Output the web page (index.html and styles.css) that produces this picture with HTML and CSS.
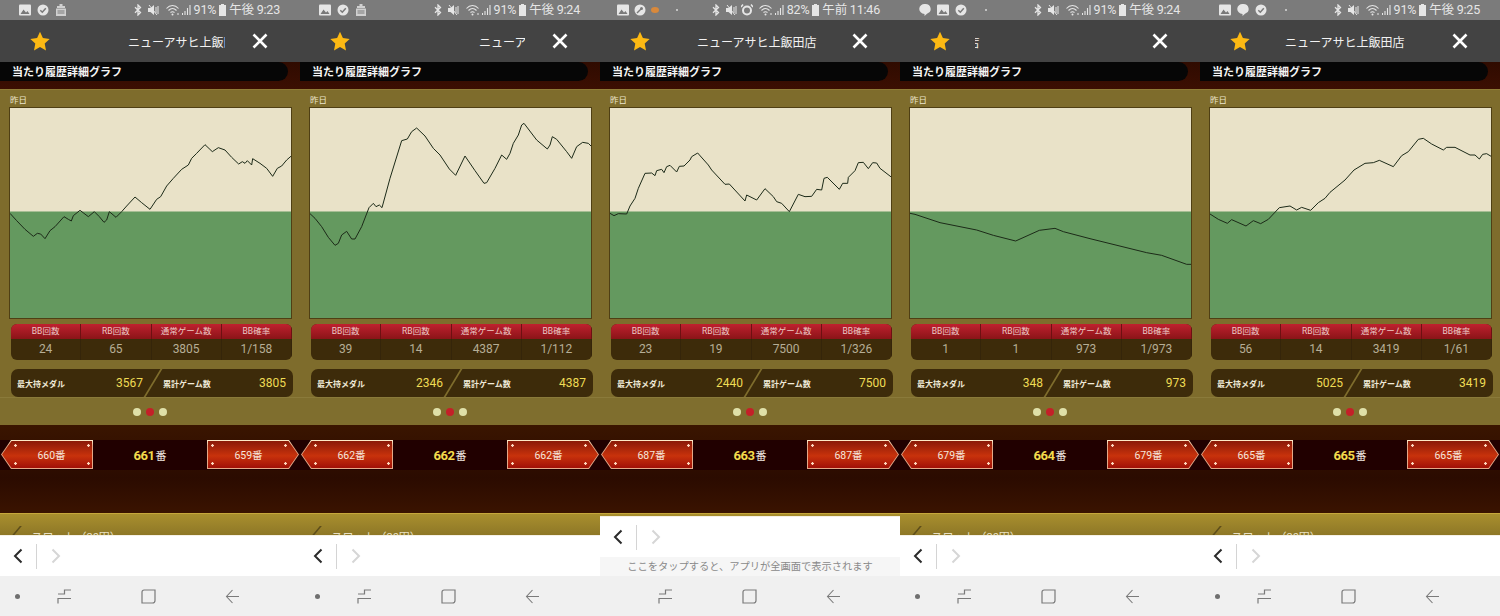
FILE: index.html
```html
<!DOCTYPE html>
<html lang="ja">
<head>
<meta charset="utf-8">
<title>当たり履歴詳細グラフ</title>
<link rel="stylesheet" href="styles.css">
</head>
<body>
<svg class="defs" aria-hidden="true">
  <symbol id="i-img" viewBox="0 0 12 11"><path d="M0 1a1 1 0 0 1 1-1h10a1 1 0 0 1 1 1v9a1 1 0 0 1-1 1H1a1 1 0 0 1-1-1z" fill="#e6e6e6"/><path d="M1.5 9.5 4.5 5l2.5 3 1.500-1.500 2 3z" fill="#7a7a7a"/></symbol>
  <symbol id="i-check" viewBox="0 0 12 12"><circle cx="6" cy="6" r="5.500" fill="#e6e6e6"/><path d="m3.300 6.200 2 2 3.500-4" fill="none" stroke="#7a7a7a" stroke-width="1.500"/></symbol>
  <symbol id="i-cal" viewBox="0 0 12 12"><path d="M4.500 0h3v2H4.500zM2 2h8v2H2zM1 4.500h10V12H1z" fill="#d0d0d0"/><path d="M2.500 7h7M2.500 9h7" stroke="#7a7a7a"/></symbol>
  <symbol id="i-bubble" viewBox="0 0 12 12"><path d="M6 0a5.500 5 0 0 1 2 9.700L5.500 12V10A5.500 5 0 0 1 6 0z" fill="#e6e6e6"/></symbol>
  <symbol id="i-key" viewBox="0 0 12 12"><circle cx="6" cy="6" r="5.500" fill="#e6e6e6"/><path d="m3 9 4-4" stroke="#7a7a7a" stroke-width="1.500"/><circle cx="7.500" cy="4.500" r="1.500" fill="#7a7a7a"/></symbol>
  <symbol id="i-bt" viewBox="0 0 8 12"><path d="M1 3.300 6.500 8.500 4 11V1l2.500 2.500L1 8.700" fill="none" stroke="#e6e6e6" stroke-width="1.300"/></symbol>
  <symbol id="i-mute" viewBox="0 0 12 12"><path d="M0 4h2.500L6 1v10L2.500 8H0z" fill="#e6e6e6"/><path d="M8 3v6M10 2v8M1 1l8 10" stroke="#e6e6e6"/></symbol>
  <symbol id="i-alarm" viewBox="0 0 12 12"><circle cx="6" cy="6.500" r="4" fill="none" stroke="#e6e6e6" stroke-width="2"/><path d="M0 3l2-2.500M12 3 10 .5" stroke="#e6e6e6" stroke-width="1.500"/></symbol>
  <symbol id="i-wifi" viewBox="0 0 14 12"><path d="M.5 4.500c3.500-4 8.500-4 12 0M2.500 6.500c2.500-2.500 5.500-2.500 8 0M4.500 8.500c1.500-1.200 2.500-1.200 4 0" fill="none" stroke="#e6e6e6" stroke-width="1.100"/><circle cx="6.500" cy="10.500" r="1" fill="#e6e6e6"/><path d="M11 10h2" stroke="#e6e6e6"/></symbol>
  <symbol id="i-sig" viewBox="0 0 9 12"><path d="M.5 9v2M3 7v4M5.500 4v7M8 1v10" stroke="#e6e6e6" stroke-width="1.100"/></symbol>
  <symbol id="i-bat" viewBox="0 0 7 12"><path d="M2 0h3v1h2v11H0V1h2z" fill="#e6e6e6"/></symbol>
  <symbol id="i-star" viewBox="0 0 20 20"><path d="m10 .8 2.900 6.300 6.800.8-5 4.700 1.300 6.800L10 16.100 4 19.400l1.300-6.800-5-4.700 6.800-.8z" fill="#fdb913"/></symbol>
  <symbol id="i-close" viewBox="0 0 16 16"><path d="m1.500 1.500 13 13m0-13-13 13" stroke="#fff" stroke-width="2.600"/></symbol>
  <symbol id="i-recent" viewBox="0 0 15 15"><path d="M14 1H7.500V5H1M14 9.500H1V14.500" fill="none" stroke="#7a7a7a" stroke-width="1.200"/></symbol>
  <symbol id="i-home" viewBox="0 0 15 15"><path d="M3 1H14V11.500A2.500 2.500 0 0 1 11.500 14H1V3A2 2 0 0 1 3 1z" fill="none" stroke="#7a7a7a" stroke-width="1.200"/></symbol>
  <symbol id="i-back" viewBox="0 0 15 15"><path d="M14 7.500H1.500M7.500 1 1.500 7.500 7.500 14" fill="none" stroke="#7a7a7a" stroke-width="1.100"/></symbol>
  <symbol id="i-prev" viewBox="0 0 10 16"><path d="M8.500 1.500 2 8l6.500 6.500" fill="none" stroke="currentColor" stroke-width="2"/></symbol>
  <symbol id="i-next" viewBox="0 0 10 16"><path d="M1.500 1.500 8 8l-6.500 6.500" fill="none" stroke="currentColor" stroke-width="2"/></symbol>
</svg>

<main class="screens">

<section class="phone">
  <header class="status">
    <div class="status-left"><svg class="si"><use href="#i-img"/></svg><svg class="si"><use href="#i-check"/></svg><svg class="si"><use href="#i-cal"/></svg></div>
    <div class="status-right"><svg class="si-bt"><use href="#i-bt"/></svg><svg class="si"><use href="#i-mute"/></svg><svg class="si-wifi"><use href="#i-wifi"/></svg><svg class="si-sig"><use href="#i-sig"/></svg><span>91%</span><svg class="si-bat"><use href="#i-bat"/></svg><span>午後 9:23</span></div>
  </header>
  <div class="appbar"><svg class="star"><use href="#i-star"/></svg><div class="title"><span class="title-text scroll-a">ニューアサヒ上飯田店</span></div><svg class="close"><use href="#i-close"/></svg></div>
  <div class="content">
    <div class="strip"><h1 class="pill">当たり履歴詳細グラフ</h1></div>
    <div class="panel">
      <div class="day">昨日</div>
      <div class="chart"><svg viewBox="30 24 843 630" preserveAspectRatio="none"><polyline points="30,340 50,362 75,388 100,409 112,400 122,402 135,416 150,392 165,380 192,350 205,358 214,363 220,347 240,331 265,350 283,335 298,350 312,367 320,360 328,335 348,352 365,335 380,318 405,291 425,308 450,328 470,298 482,290 500,258 520,235 545,208 565,195 575,175 590,160 615,134 637,155 655,143 675,150 695,172 716,192 727,185 735,190 742,182 755,195 758,176 780,190 800,205 818,229 832,205 845,198 860,180 875,167"/></svg></div>
      <div class="table"><div class="th">BB回数</div><div class="th">RB回数</div><div class="th">通常ゲーム数</div><div class="th">BB確率</div><div class="td">24</div><div class="td">65</div><div class="td">3805</div><div class="td">1/158</div></div>
      <div class="stats"><div class="stat"><span class="stat-label">最大持メダル</span><span class="stat-value">3567</span></div><i class="slash"></i><div class="stat"><span class="stat-label">累計ゲーム数</span><span class="stat-value">3805</span></div></div>
    </div>
    <div class="pager"><i class="dot"></i><i class="dot on"></i><i class="dot"></i></div>
    <div class="machine"><div class="btn btn-l">660番</div><div class="current"><b>661</b>番</div><div class="btn btn-r">659番</div></div>
    <div class="goldbar"><i class="goldmark"></i>スロット（20円）</div>
  </div>
  <div class="toolbar"><svg class="prev"><use href="#i-prev"/></svg><i class="divider"></i><svg class="next"><use href="#i-next"/></svg></div>
  <nav class="navbar"><i class="navdot"></i><svg class="nav-recent"><use href="#i-recent"/></svg><svg class="nav-home"><use href="#i-home"/></svg><svg class="nav-back"><use href="#i-back"/></svg></nav>
</section>

<section class="phone">
  <header class="status">
    <div class="status-left"><svg class="si"><use href="#i-img"/></svg><svg class="si"><use href="#i-check"/></svg><svg class="si"><use href="#i-cal"/></svg></div>
    <div class="status-right"><svg class="si-bt"><use href="#i-bt"/></svg><svg class="si"><use href="#i-mute"/></svg><svg class="si-wifi"><use href="#i-wifi"/></svg><svg class="si-sig"><use href="#i-sig"/></svg><span>91%</span><svg class="si-bat"><use href="#i-bat"/></svg><span>午後 9:24</span></div>
  </header>
  <div class="appbar"><svg class="star"><use href="#i-star"/></svg><div class="title"><span class="title-text scroll-b">ニューアサヒ上飯田店</span></div><svg class="close"><use href="#i-close"/></svg></div>
  <div class="content">
    <div class="strip"><h1 class="pill">当たり履歴詳細グラフ</h1></div>
    <div class="panel">
      <div class="day">昨日</div>
      <div class="chart"><svg viewBox="30 24 843 630" preserveAspectRatio="none"><polyline points="30,341 45,355 65,380 85,412 105,436 115,430 125,405 140,394 155,417 165,417 185,380 207,323 220,310 228,320 238,315 246,323 270,235 305,122 322,117 335,95 350,84 375,108 400,145 420,165 448,207 467,226 495,168 525,212 552,250 560,248 585,205 605,165 620,178 630,160 640,130 655,105 665,75 672,70 710,120 742,147 750,135 757,110 770,118 800,155 815,175 830,140 848,127 865,130 875,140"/></svg></div>
      <div class="table"><div class="th">BB回数</div><div class="th">RB回数</div><div class="th">通常ゲーム数</div><div class="th">BB確率</div><div class="td">39</div><div class="td">14</div><div class="td">4387</div><div class="td">1/112</div></div>
      <div class="stats"><div class="stat"><span class="stat-label">最大持メダル</span><span class="stat-value">2346</span></div><i class="slash"></i><div class="stat"><span class="stat-label">累計ゲーム数</span><span class="stat-value">4387</span></div></div>
    </div>
    <div class="pager"><i class="dot"></i><i class="dot on"></i><i class="dot"></i></div>
    <div class="machine"><div class="btn btn-l">662番</div><div class="current"><b>662</b>番</div><div class="btn btn-r">662番</div></div>
    <div class="goldbar"><i class="goldmark"></i>スロット（20円）</div>
  </div>
  <div class="toolbar"><svg class="prev"><use href="#i-prev"/></svg><i class="divider"></i><svg class="next"><use href="#i-next"/></svg></div>
  <nav class="navbar"><i class="navdot"></i><svg class="nav-recent"><use href="#i-recent"/></svg><svg class="nav-home"><use href="#i-home"/></svg><svg class="nav-back"><use href="#i-back"/></svg></nav>
</section>

<section class="phone">
  <header class="status">
    <div class="status-left tight"><svg class="si"><use href="#i-img"/></svg><svg class="si"><use href="#i-key"/></svg><i class="spark"></i><i class="tiny"></i></div>
    <div class="status-right"><svg class="si-bt"><use href="#i-bt"/></svg><svg class="si"><use href="#i-mute"/></svg><svg class="si"><use href="#i-alarm"/></svg><svg class="si-wifi"><use href="#i-wifi"/></svg><svg class="si-sig"><use href="#i-sig"/></svg><span>82%</span><svg class="si-bat"><use href="#i-bat"/></svg><span>午前 11:46</span></div>
  </header>
  <div class="appbar"><svg class="star"><use href="#i-star"/></svg><div class="title"><span class="title-text scroll-c">ニューアサヒ上飯田店</span></div><svg class="close"><use href="#i-close"/></svg></div>
  <div class="content">
    <div class="strip"><h1 class="pill">当たり履歴詳細グラフ</h1></div>
    <div class="panel">
      <div class="day">昨日</div>
      <div class="chart"><svg viewBox="30 24 843 630" preserveAspectRatio="none"><polyline points="30,340 42,347 55,341 80,342 90,318 105,295 115,265 135,220 155,219 165,227 170,212 185,208 192,218 200,200 210,196 230,216 238,199 252,198 270,180 275,170 293,159 325,195 335,210 375,253 388,252 435,303 440,285 470,300 495,266 520,290 530,305 545,310 568,335 595,283 615,290 635,289 650,268 665,270 672,235 682,232 718,268 728,250 743,250 745,232 765,212 775,188 790,187 805,206 818,188 830,189 840,205 875,232"/></svg></div>
      <div class="table"><div class="th">BB回数</div><div class="th">RB回数</div><div class="th">通常ゲーム数</div><div class="th">BB確率</div><div class="td">23</div><div class="td">19</div><div class="td">7500</div><div class="td">1/326</div></div>
      <div class="stats"><div class="stat"><span class="stat-label">最大持メダル</span><span class="stat-value">2440</span></div><i class="slash"></i><div class="stat"><span class="stat-label">累計ゲーム数</span><span class="stat-value">7500</span></div></div>
    </div>
    <div class="pager"><i class="dot"></i><i class="dot on"></i><i class="dot"></i></div>
    <div class="machine"><div class="btn btn-l">687番</div><div class="current"><b>663</b>番</div><div class="btn btn-r">687番</div></div>
    <div class="goldbar"><i class="goldmark"></i>スロット（20円）</div>
  </div>
  <div class="toolbar"><svg class="prev"><use href="#i-prev"/></svg><i class="divider"></i><svg class="next"><use href="#i-next"/></svg></div>
  <div class="hint">ここをタップすると、アプリが全画面で表示されます</div>
  <nav class="navbar"><i class="navdot hidden"></i><svg class="nav-recent"><use href="#i-recent"/></svg><svg class="nav-home"><use href="#i-home"/></svg><svg class="nav-back"><use href="#i-back"/></svg></nav>
</section>

<section class="phone">
  <header class="status">
    <div class="status-left"><svg class="si"><use href="#i-bubble"/></svg><svg class="si"><use href="#i-img"/></svg><svg class="si"><use href="#i-check"/></svg><i class="tiny"></i></div>
    <div class="status-right"><svg class="si-bt"><use href="#i-bt"/></svg><svg class="si"><use href="#i-mute"/></svg><svg class="si-wifi"><use href="#i-wifi"/></svg><svg class="si-sig"><use href="#i-sig"/></svg><span>91%</span><svg class="si-bat"><use href="#i-bat"/></svg><span>午後 9:24</span></div>
  </header>
  <div class="appbar"><svg class="star"><use href="#i-star"/></svg><div class="title"><span class="title-text scroll-d">ニューアサヒ上飯田店</span></div><svg class="close"><use href="#i-close"/></svg></div>
  <div class="content">
    <div class="strip"><h1 class="pill">当たり履歴詳細グラフ</h1></div>
    <div class="panel">
      <div class="day">昨日</div>
      <div class="chart"><svg viewBox="30 24 843 630" preserveAspectRatio="none"><polyline points="30,340 45,343 120,368 230,390 280,406 347,423 418,391 465,385 490,395 570,416 740,458 785,466 860,493 875,493"/></svg></div>
      <div class="table"><div class="th">BB回数</div><div class="th">RB回数</div><div class="th">通常ゲーム数</div><div class="th">BB確率</div><div class="td">1</div><div class="td">1</div><div class="td">973</div><div class="td">1/973</div></div>
      <div class="stats"><div class="stat"><span class="stat-label">最大持メダル</span><span class="stat-value">348</span></div><i class="slash"></i><div class="stat"><span class="stat-label">累計ゲーム数</span><span class="stat-value">973</span></div></div>
    </div>
    <div class="pager"><i class="dot"></i><i class="dot on"></i><i class="dot"></i></div>
    <div class="machine"><div class="btn btn-l">679番</div><div class="current"><b>664</b>番</div><div class="btn btn-r">679番</div></div>
    <div class="goldbar"><i class="goldmark"></i>スロット（20円）</div>
  </div>
  <div class="toolbar"><svg class="prev"><use href="#i-prev"/></svg><i class="divider"></i><svg class="next"><use href="#i-next"/></svg></div>
  <nav class="navbar"><i class="navdot"></i><svg class="nav-recent"><use href="#i-recent"/></svg><svg class="nav-home"><use href="#i-home"/></svg><svg class="nav-back"><use href="#i-back"/></svg></nav>
</section>

<section class="phone">
  <header class="status">
    <div class="status-left"><svg class="si"><use href="#i-img"/></svg><svg class="si"><use href="#i-bubble"/></svg><svg class="si"><use href="#i-check"/></svg><i class="tiny"></i></div>
    <div class="status-right"><svg class="si-bt"><use href="#i-bt"/></svg><svg class="si"><use href="#i-mute"/></svg><svg class="si-wifi"><use href="#i-wifi"/></svg><svg class="si-sig"><use href="#i-sig"/></svg><span>91%</span><svg class="si-bat"><use href="#i-bat"/></svg><span>午後 9:25</span></div>
  </header>
  <div class="appbar"><svg class="star"><use href="#i-star"/></svg><div class="title"><span class="title-text scroll-e">ニューアサヒ上飯田店</span></div><svg class="close"><use href="#i-close"/></svg></div>
  <div class="content">
    <div class="strip"><h1 class="pill">当たり履歴詳細グラフ</h1></div>
    <div class="panel">
      <div class="day">昨日</div>
      <div class="chart"><svg viewBox="30 24 843 630" preserveAspectRatio="none"><polyline points="30,342 55,358 82,370 95,359 138,378 160,362 182,371 205,358 238,323 270,318 290,330 305,322 332,331 355,308 375,295 390,277 435,240 462,210 495,190 520,188 538,181 580,200 605,167 625,155 655,118 670,115 695,132 730,150 740,142 765,142 810,165 825,165 838,177 848,163 860,161 875,170"/></svg></div>
      <div class="table"><div class="th">BB回数</div><div class="th">RB回数</div><div class="th">通常ゲーム数</div><div class="th">BB確率</div><div class="td">56</div><div class="td">14</div><div class="td">3419</div><div class="td">1/61</div></div>
      <div class="stats"><div class="stat"><span class="stat-label">最大持メダル</span><span class="stat-value">5025</span></div><i class="slash"></i><div class="stat"><span class="stat-label">累計ゲーム数</span><span class="stat-value">3419</span></div></div>
    </div>
    <div class="pager"><i class="dot"></i><i class="dot on"></i><i class="dot"></i></div>
    <div class="machine"><div class="btn btn-l">665番</div><div class="current"><b>665</b>番</div><div class="btn btn-r">665番</div></div>
    <div class="goldbar"><i class="goldmark"></i>スロット（20円）</div>
  </div>
  <div class="toolbar"><svg class="prev"><use href="#i-prev"/></svg><i class="divider"></i><svg class="next"><use href="#i-next"/></svg></div>
  <nav class="navbar"><i class="navdot"></i><svg class="nav-recent"><use href="#i-recent"/></svg><svg class="nav-home"><use href="#i-home"/></svg><svg class="nav-back"><use href="#i-back"/></svg></nav>
</section>

</main>
</body>
</html>
```
FILE: styles.css
```css
* { box-sizing: border-box; }
html, body { margin: 0; height: 616px; overflow: hidden; background: #000; }
body { font-family: Roboto, "Noto Sans CJK JP", sans-serif; }
.defs { display: none; }
.screens { display: flex; width: 1500px; height: 616px; }
.phone { display: flex; flex-direction: column; width: 300px; height: 616px; overflow: hidden; }

/* status bar */
.status { display: flex; justify-content: space-between; align-items: center; flex: none; height: 20px; padding: 0 20px 0 19px; background: #7b7b7b; color: #e6e6e6; font-size: 12.500px; line-height: 20px; }
.status-left, .status-right { display: flex; align-items: center; }
.status-left { gap: 6px; }
.status-left.tight { margin-left: -2px; gap: 5px; }
.status-right { gap: 3px; letter-spacing: -.2px; }
.si { width: 12px; height: 12px; }
.si-bt { width: 8px; height: 12px; margin-right: 3px; }
.si-wifi { width: 14px; height: 12px; margin-left: 3px; }
.si-sig { width: 9px; height: 12px; margin-left: -1px; }
.si-bat { width: 7px; height: 12px; }
.spark { width: 8px; height: 6px; border-radius: 50%; background: #d8893c; }
.tiny { width: 2px; height: 2px; margin-left: 12px; background: #d8d8d8; border-radius: 50%; }

/* app bar */
.appbar { display: flex; align-items: center; flex: none; height: 42px; padding-left: 30px; background: #434343; }
.star { flex: none; width: 20px; height: 20px; }
.title { flex: none; width: 150px; margin-left: 25px; overflow: hidden; white-space: nowrap; color: #f2f2f2; font-size: 12px; }
.title-text { display: block; }
.scroll-a { margin-left: 53px; }
.scroll-b { margin-left: 104px; }
.scroll-c { margin-left: 22px; }
.scroll-d { margin-left: -115px; }
.scroll-e { margin-left: 10px; }
.close { flex: none; width: 16px; height: 16px; margin-left: 27px; }

/* content */
.content { display: flex; flex-direction: column; flex: 1; min-height: 0; overflow: hidden; background: #2e0d00; }
.strip { flex: none; height: 27px; background: linear-gradient(#2f0b00, #3c0f02); }
.pill { display: flex; align-items: center; width: 288px; height: 19px; margin: 0; padding: 2px 0 0 12px; background: #060606; border-radius: 0 10px 10px 0; color: #f4f4f4; font-size: 11px; font-weight: 700; line-height: 17px; }
.panel { flex: none; height: 308px; padding: 0 7px 0 9px; background: #7e6c2c; border-top: 1px solid #8f7c36; }
.day { height: 17px; padding: 5px 0 0 1px; color: #ece6cc; font-size: 8.500px; line-height: 11px; }
.chart { width: 283px; height: 212px; border: 1px solid #4f3f14; background: linear-gradient(#e9e2c8 0, #e9e2c8 103px, #64995f 104px); }
.chart svg { display: block; width: 100%; height: 100%; }
.chart polyline { fill: none; stroke: #1c2a18; stroke-width: 3; stroke-linejoin: round; }
.table { display: grid; grid-template-columns: repeat(4, 1fr); grid-template-rows: 15px 21px; width: 281px; height: 36px; margin: 5px 0 0 2px; overflow: hidden; border-radius: 6px; background: #3d2b0a; }
.th { background: linear-gradient(#c0202e, #8a1418); border-right: 1px solid #6e1012; color: #ecc9c6; font-size: 8.500px; line-height: 15px; text-align: center; }
.td { border-right: 1px solid #35250a; color: #b6ae96; font-size: 12px; line-height: 21px; text-align: center; }
.stats { display: flex; align-items: center; width: 282px; height: 28px; margin: 9px 0 0 2px; padding: 0 7px 0 6px; border-radius: 7px; background: #3d2b0a; }
.stat { display: flex; justify-content: space-between; align-items: center; flex: 1; }
.stat:first-child { flex: none; width: 126px; }
.stat-label { color: #f0ead8; font-size: 8px; font-weight: 700; }
.stat-value { color: #efdc55; font-size: 12px; }
.slash { flex: none; width: 1.500px; height: 28px; margin: 0 9.500px 0 9px; background: #7e6c2c; transform: skewX(-31deg); }
.pager { display: flex; justify-content: center; align-items: center; gap: 5px; flex: none; height: 28px; background: #7f6e2e; border-top: 1px solid #8a7a3a; }
.dot { width: 8px; height: 8px; border-radius: 50%; background: #dfe0a8; }
.dot.on { background: #c42028; }

/* machine selector */
.machine { display: flex; justify-content: space-between; align-items: center; flex: none; height: 88px; padding: 15px 1px 44px; background: linear-gradient(#210000, #210000) 0 15px / 100% 30px no-repeat, linear-gradient(#3a1500, #2b0b00 60%, #3a1300); }
.btn { position: relative; z-index: 0; display: flex; justify-content: center; align-items: center; width: 92px; height: 29px; background: linear-gradient(#fff0cc, #e4a888 20%, #e4a888); color: #f6e6dc; font-size: 10.500px; }
.btn::before { content: ""; position: absolute; inset: 1px 1px 1px 1px; z-index: -1; background-repeat: no-repeat; background-size: 3px 3px, 3px 3px, 3px 3px, 3px 3px, 100% 100%; }
.btn-l { padding-left: 9px; clip-path: polygon(10px 0, 100% 0, 100% 100%, 10px 100%, 0 50%); }
.btn-l::before { background-image: radial-gradient(circle, #ffd9c0 1px, transparent 1.500px), radial-gradient(circle, #ffd9c0 1px, transparent 1.500px), radial-gradient(circle, #ffd9c0 1px, transparent 1.500px), radial-gradient(circle, #ffd9c0 1px, transparent 1.500px), linear-gradient(#8a1a08, #c8320c 55%, #a01008); background-position: 12px 3px, 85px 3px, 12px 21px, 85px 21px, 0 0; clip-path: polygon(9.500px 0, 100% 0, 100% 100%, 9.500px 100%, 0 50%); }
.btn-r { padding-right: 9px; clip-path: polygon(0 0, calc(100% - 10px) 0, 100% 50%, calc(100% - 10px) 100%, 0 100%); }
.btn-r::before { background-image: radial-gradient(circle, #ffd9c0 1px, transparent 1.500px), radial-gradient(circle, #ffd9c0 1px, transparent 1.500px), radial-gradient(circle, #ffd9c0 1px, transparent 1.500px), radial-gradient(circle, #ffd9c0 1px, transparent 1.500px), linear-gradient(#8a1a08, #c8320c 55%, #a01008); background-position: 3px 3px, 76px 3px, 3px 21px, 76px 21px, 0 0; clip-path: polygon(0 0, calc(100% - 9.500px) 0, 100% 50%, calc(100% - 9.500px) 100%, 0 100%); }
.current { color: #f0e8e0; font-size: 11px; }
.current b { color: #f3db4c; font-size: 13px; letter-spacing: -.4px; margin-right: 1px; }
.goldbar { flex: none; height: 24px; padding: 13px 0 0 31px; background: linear-gradient(#a98f2e, #8b7526); border-top: 1px solid #c7a83c; color: #e8e0c4; font-size: 11px; line-height: 14px; white-space: nowrap; }
.goldmark { display: inline-block; width: 1.500px; height: 14px; margin-right: -1px; background: #5d4d1a; transform: translate(-17px, -1px) skewX(-40deg); }

/* browser toolbar */
.toolbar { display: flex; align-items: center; flex: none; height: 41px; padding-left: 13px; background: #fff; border-top: 1px solid #f5f1e6; }
.prev { width: 10px; height: 16px; color: #2b2b2b; }
.next { width: 10px; height: 16px; margin-left: 14px; color: #d6d6d6; }
.divider { width: 1px; height: 25px; margin-left: 13px; background: #d4d4d4; }
.hint { flex: none; height: 19px; background: #f6f6f6; color: #8a8a8a; font-size: 10.250px; line-height: 19px; text-align: center; }

/* system nav */
.navbar { display: flex; align-items: center; flex: none; height: 40px; padding-left: 15px; background: #f0f0f0; }
.navdot { flex: none; width: 5px; height: 5px; border-radius: 50%; background: #6f6f6f; }
.navdot.hidden { visibility: hidden; margin-left: 1px; }
.nav-recent { flex: none; width: 15px; height: 15px; margin-left: 37px; }
.nav-home { flex: none; width: 15px; height: 15px; margin-left: 69px; }
.nav-back { flex: none; width: 15px; height: 15px; margin-left: 69px; }
```
